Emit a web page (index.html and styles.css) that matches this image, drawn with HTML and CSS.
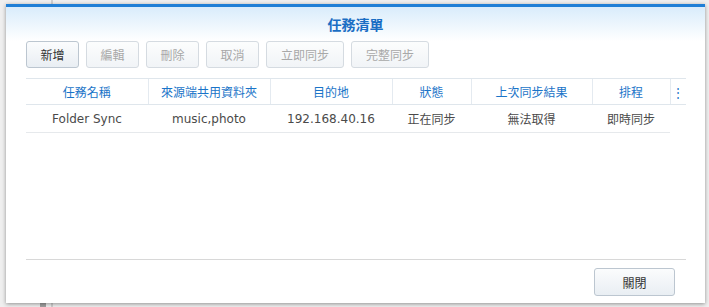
FILE: index.html
```html
<!DOCTYPE html>
<html lang="zh-Hant">
<head>
    <meta charset="UTF-8">
    <title>任務清單</title>
    <link rel="stylesheet" href="styles.css">
</head>
<body>
<div class="dialog">
    <div class="dialog-title">任務清單</div>
    <div class="toolbar">
        <button class="btn">新增</button>
        <button class="btn" disabled>編輯</button>
        <button class="btn" disabled>刪除</button>
        <button class="btn" disabled>取消</button>
        <button class="btn wide" disabled>立即同步</button>
        <button class="btn wide" disabled>完整同步</button>
    </div>
    <div class="grid-wrap">
        <table class="grid">
            <thead>
            <tr>
                <th class="c1">任務名稱</th>
                <th class="c2">來源端共用資料夾</th>
                <th class="c3">目的地</th>
                <th class="c4">狀態</th>
                <th class="c5">上次同步結果</th>
                <th class="c6">排程</th>
                <th class="c7">&#8942;</th>
            </tr>
            </thead>
            <tbody>
            <tr>
                <td>Folder Sync</td>
                <td>music,photo</td>
                <td>192.168.40.16</td>
                <td>正在同步</td>
                <td>無法取得</td>
                <td>即時同步</td>
                <td class="empty"></td>
            </tr>
            </tbody>
        </table>
    </div>
    <div class="footer">
        <button class="btn close">關閉</button>
    </div>
</div>
</body>
</html>
```

FILE: styles.css
```css
* {
    margin: 0;
    padding: 0;
    box-sizing: border-box;
}

body {
    width: 709px;
    height: 307px;
    overflow: hidden;
    background-color: #efefef;
    background-image:
        linear-gradient(to right, transparent 40px, #a0a0a0 40px, #a0a0a0 46px, transparent 46px),
        linear-gradient(to right, transparent 51px, #cfcfcf 51px, #cfcfcf 53px, transparent 53px);
    background-size: 100% 8px, 100% 100%;
    background-position: bottom left, top left;
    background-repeat: no-repeat;
    font-family: "DejaVu Sans", "Noto Sans CJK TC", sans-serif;
    font-size: 12px;
    color: #444;
}

.dialog {
    margin: 4px 0 0 6px;
    width: 699px;
    height: 299px;
    background: #fff;
    border-top: 3px solid #1f7fd6;
    box-shadow: 0 1px 4px rgba(0, 0, 0, 0.4);
    display: flex;
    flex-direction: column;
}

.dialog-title {
    height: 34px;
    line-height: 34px;
    text-align: center;
    font-family: "Noto Sans CJK TC", sans-serif;
    font-size: 14px;
    font-weight: bold;
    color: #1a6ec4;
    background: linear-gradient(#d9ecfb, #ffffff);
}

.toolbar {
    display: flex;
    gap: 7px;
    padding: 0 20px;
}

.btn {
    width: 53px;
    height: 27px;
    border: 1px solid #bcc6d0;
    border-radius: 3px;
    background: linear-gradient(#fbfcfd, #e9eef3);
    font-family: "Noto Sans CJK TC", sans-serif;
    font-size: 12px;
    color: #333;
}

.btn.wide {
    width: 78px;
}

.btn:disabled {
    color: #a8a8a8;
    border-color: #d5dbe1;
    background: linear-gradient(#fcfdfd, #f1f4f7);
}

.grid-wrap {
    padding: 10px 19px 0 20px;
    flex: 1;
}

.grid {
    width: 660px;
    border-collapse: collapse;
    table-layout: fixed;
}

.grid th {
    height: 26px;
    font-family: "Noto Sans CJK TC", sans-serif;
    font-weight: normal;
    font-size: 12px;
    color: #1a74c8;
    border-top: 1px solid #dfe6ec;
    border-bottom: 1px solid #dfe6ec;
    border-left: 1px solid #e4eaf0;
}

.grid th.c1 {
    border-left: none;
}

.grid td {
    height: 28px;
    text-align: center;
    font-size: 12px;
    color: #4a4a4a;
    border-bottom: 1px solid #e6e9ec;
}

.grid td.empty {
    border-bottom: none;
}

.c1 { width: 122px; }
.c2 { width: 122px; }
.c3 { width: 122px; }
.c4 { width: 79px; }
.c5 { width: 121px; }
.c6 { width: 78px; }
.c7 { width: 16px; font-weight: bold; }

.footer {
    margin: 0 19px 0 20px;
    border-top: 1px solid #d8d8d8;
    height: 44px;
    display: flex;
    justify-content: flex-end;
    align-items: flex-start;
    padding: 8px 11px 0 0;
}

.btn.close {
    width: 81px;
    height: 28px;
    color: #333;
}
```
